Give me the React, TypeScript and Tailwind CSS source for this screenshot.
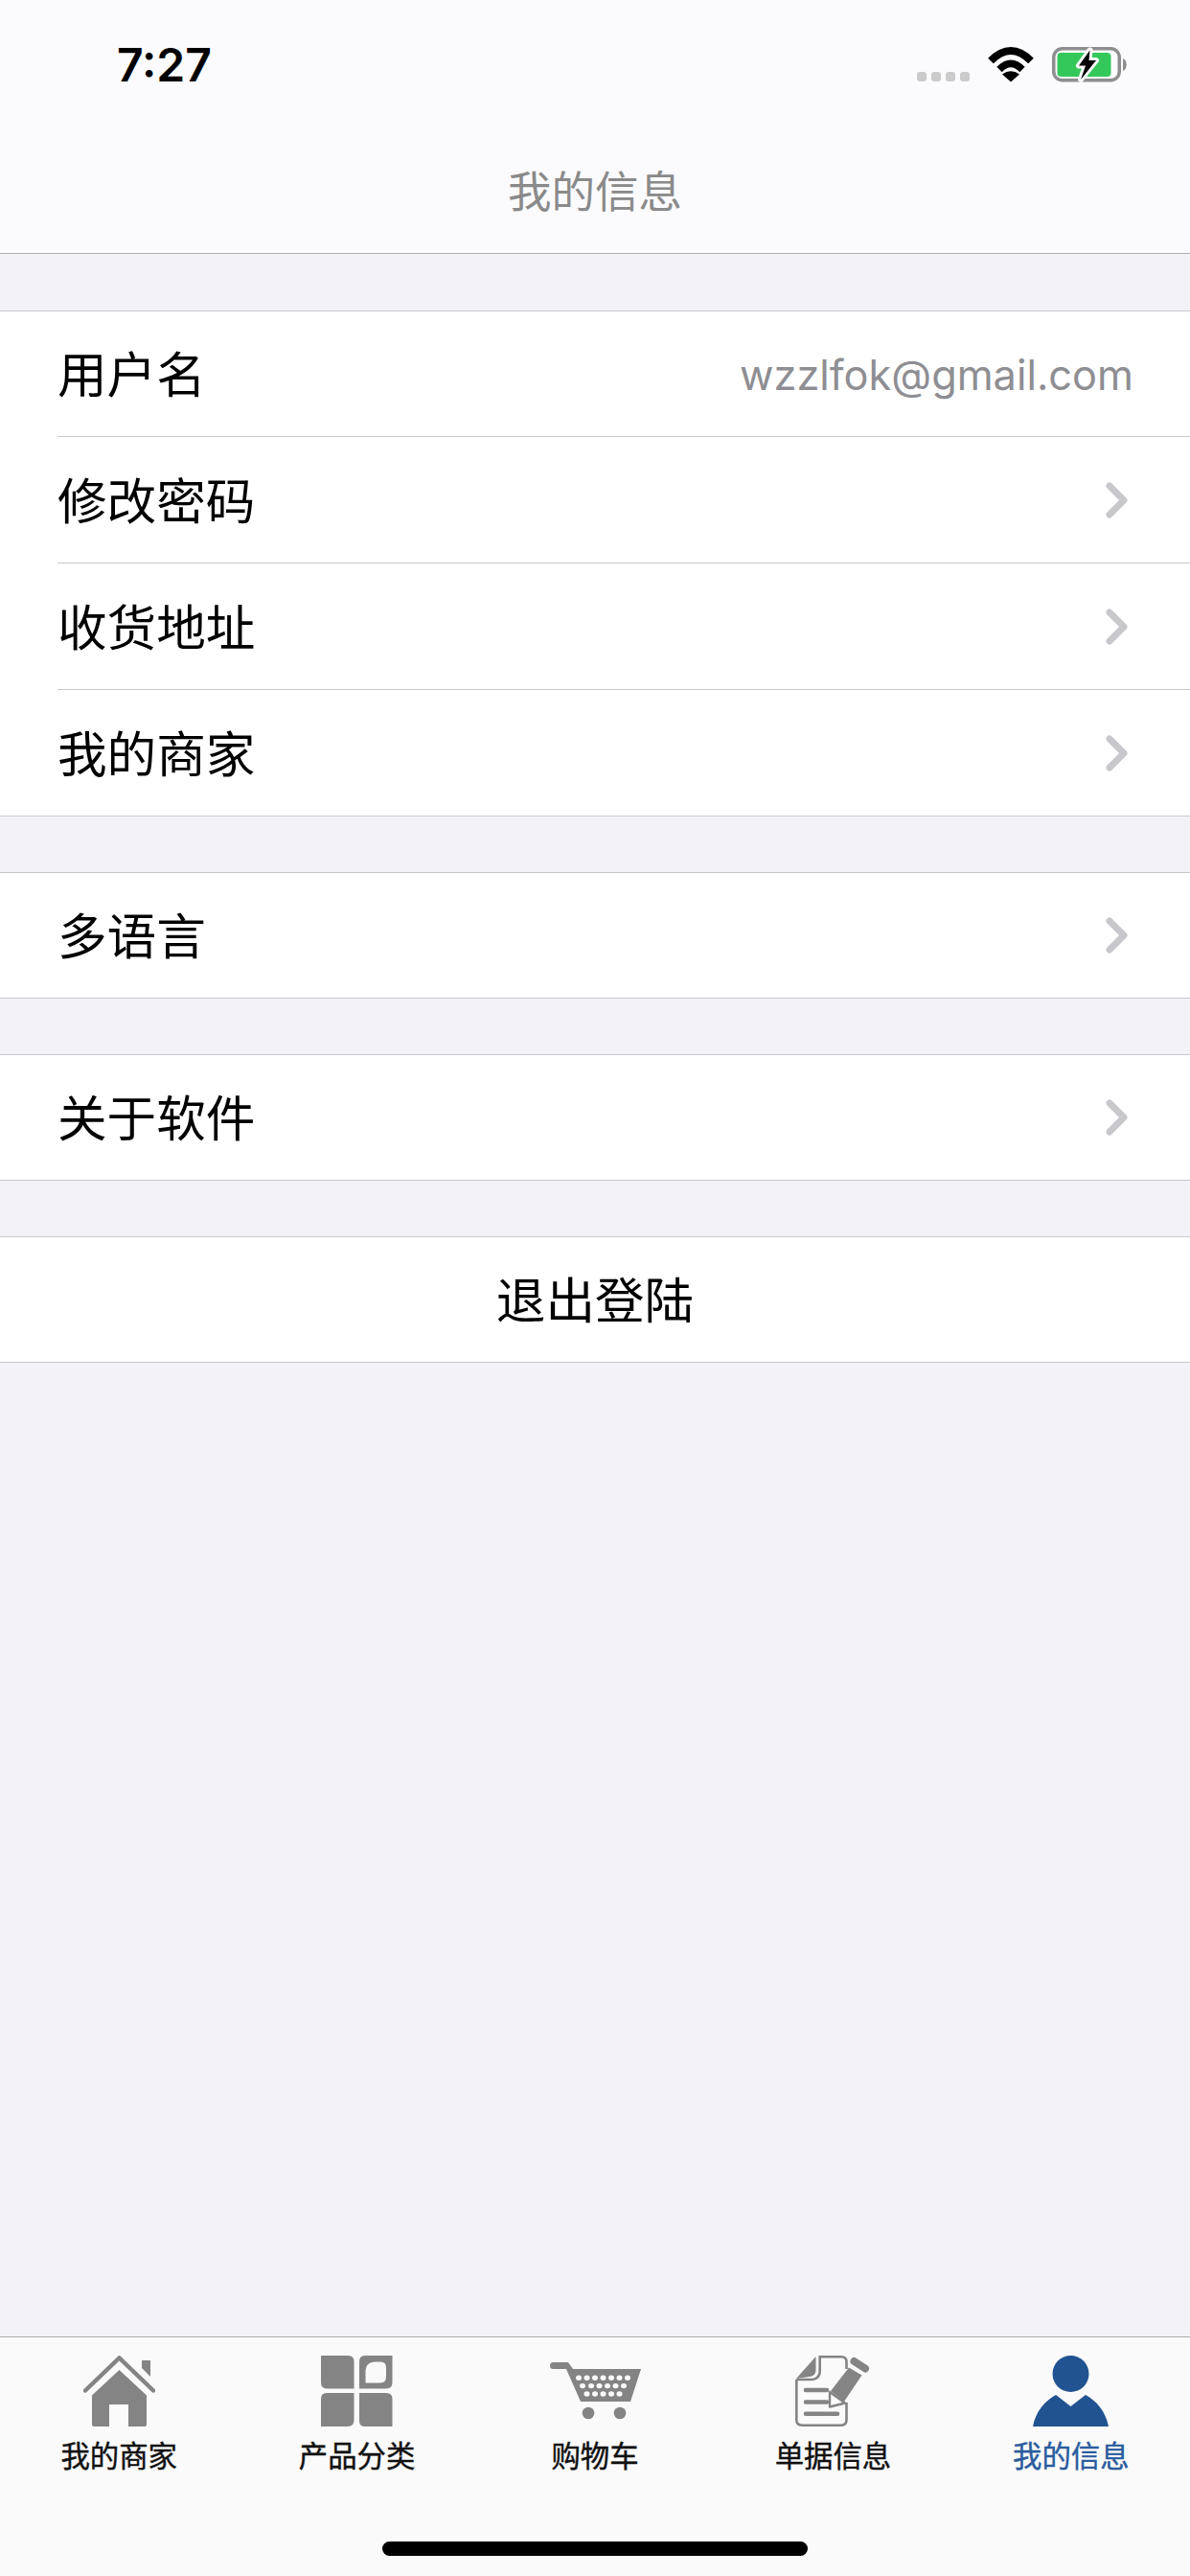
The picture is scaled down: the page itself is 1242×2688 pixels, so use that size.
import React from "react";

const GRAY = "#848484";

function Chevron() {
  return (
    <svg width="24" height="38" viewBox="0 0 24 38" className="block">
      <path d="M4 4 L19 19 L4 34" fill="none" stroke="#c7c7cc" strokeWidth="7" strokeLinecap="round" strokeLinejoin="round" />
    </svg>
  );
}

function Row({ label, heightClass, last, value }: { label: string; heightClass: string; last?: boolean; value?: string }) {
  return (
    <div className={`ml-[60px] pr-[64px] flex items-center justify-between ${heightClass} ${last ? "" : "border-b border-[#c8c7cc]"}`}>
      <span className="mb-[4px] text-[51.6px] leading-none text-black">{label}</span>
      {value ? (
        <span className="mt-[4px] mr-[-5px] font-['Inter',sans-serif] text-[43.3px] leading-none text-[#8e8e93]">{value}</span>
      ) : (
        <Chevron />
      )}
    </div>
  );
}

function Section({ className, children }: { className: string; children: React.ReactNode }) {
  return <section className={`bg-white border-y border-[#c8c7cc] ${className}`}>{children}</section>;
}

function Wifi() {
  return (
    <svg width="48" height="37" viewBox="0 0 48 37" className="block">
      <path d="M3 14.5 Q24 -6.5 45 14.5" fill="none" stroke="#000" strokeWidth="8" />
      <path d="M12 23.5 Q24 11.5 36 23.5" fill="none" stroke="#000" strokeWidth="7.5" />
      <path d="M24 36.5 L15 28.5 Q24 22 33 28.5 Z" fill="#000" />
    </svg>
  );
}

function Battery() {
  return (
    <svg width="79" height="37" viewBox="0 0 79 37" className="block">
      <rect x="1.75" y="1.75" width="68.5" height="33" rx="9" fill="none" stroke="#8e8e8e" strokeWidth="3.5" />
      <rect x="5.5" y="6" width="56" height="25" rx="4" fill="#34c85a" />
      <path d="M74 12 C79 14 79 23 74 25 Z" fill="#8e8e8e" />
      <path d="M39.5 3.5 L28 19.5 L35 19.5 L30 34 L46 14 L38.5 14 Z" fill="#000" stroke="#fbfbfd" strokeWidth="6" paintOrder="stroke" strokeLinejoin="round" />
    </svg>
  );
}

function HomeIcon() {
  return (
    <svg width="75" height="74" viewBox="0 0 75 74" className="block">
      <path d="M2 36.5 L37.5 2.5 L73 36.5" fill="none" stroke={GRAY} strokeWidth="4.5" strokeLinecap="round" strokeLinejoin="miter" />
      <path d="M61 5 H70 V22 L61 13 Z" fill={GRAY} />
      <path fillRule="evenodd" d="M37.5 15 L66 41.5 V72 Q66 74 64 74 H47 V51 H27 V74 H11 Q9 74 9 72 V41.5 Z" fill={GRAY} />
    </svg>
  );
}

function GridIcon() {
  return (
    <svg width="75" height="74" viewBox="0 0 75 74" className="block">
      <path d="M0 0 H28 Q34.5 0 34.5 6 V34.5 H6 Q0 34.5 0 28 Z" fill={GRAY} />
      <path fillRule="evenodd" d="M46 0 H74.5 V28 Q74.5 34.5 68 34.5 H40 V6 Q40 0 46 0 Z M46.5 28.5 V17 Q46.5 6.5 57 6.5 H62 Q68 6.5 68 12.5 V22 Q68 28.5 62 28.5 Z" fill={GRAY} />
      <path d="M6 39 H34.5 V67 Q34.5 74 28 74 H0 V45 Q0 39 6 39 Z" fill={GRAY} />
      <path d="M40 39 H68 Q74.5 39 74.5 45 V74 H46 Q40 74 40 68 Z" fill={GRAY} />
    </svg>
  );
}

function CartIcon() {
  const r1 = [30, 38.5, 47, 55.5, 64, 72.5, 81];
  const r2 = [34, 43, 51.5, 60, 68.5, 77];
  const r3 = [38.5, 47, 55.5, 64, 72.5];
  return (
    <svg width="95" height="60" viewBox="0 0 95 60" className="block">
      <path d="M3.5 0 H19 L24 7 H95 L84 41 H32 L17 7 H3.5 A3.5 3.5 0 0 1 3.5 0 Z" fill={GRAY} />
      {r1.map((x) => <ellipse key={`a${x}`} cx={x} cy="16.3" rx="3" ry="2.7" fill="#fafafa" />)}
      {r2.map((x) => <ellipse key={`b${x}`} cx={x} cy="24.6" rx="3" ry="2.7" fill="#fafafa" />)}
      {r3.map((x) => <ellipse key={`c${x}`} cx={x} cy="33" rx="3" ry="2.7" fill="#fafafa" />)}
      <circle cx="40" cy="53" r="6.3" fill={GRAY} />
      <circle cx="73" cy="53" r="6.3" fill={GRAY} />
    </svg>
  );
}

function DocIcon() {
  return (
    <svg width="78" height="74" viewBox="0 0 78 74" className="block">
      <path d="M1 24 L21.5 1 V15 Q21.5 21 15 22 Z" fill={GRAY} />
      <path d="M1.3 25 H18 Q25.7 24 25.7 16 V1.3 H48 Q53.5 1.3 53.5 6.5 V14 M53.5 49 V67 Q53.5 72.7 48 72.7 H7 Q1.3 72.7 1.3 67 V25" fill="none" stroke={GRAY} strokeWidth="2.6" />
      <path d="M11 36 H33 M11 48.5 H33 M11 60.7 H44" fill="none" stroke={GRAY} strokeWidth="4.6" strokeLinecap="round" />
      <path d="M37 37 L56 12.5 L69.5 20.5 L51 48 Z" fill={GRAY} />
      <path d="M61.5 6 L73 13.5" fill="none" stroke={GRAY} strokeWidth="8" strokeLinecap="round" />
      <path d="M36 38 L36 53.5 L52 49.5 Z" fill="#fafafa" stroke={GRAY} strokeWidth="2.4" strokeLinejoin="round" />
    </svg>
  );
}

function PersonIcon() {
  return (
    <svg width="79" height="74" viewBox="0 0 79 74" className="block">
      <ellipse cx="39.5" cy="19" rx="19" ry="19" fill="#215391" />
      <path d="M0 74 C3 58 13 47 24 41 L39.5 53 L55 41 C66 47 76 58 79 74 Z" fill="#215391" />
    </svg>
  );
}

function Tab({ icon, label, active }: { icon: React.ReactNode; label: string; active?: boolean }) {
  return (
    <div className="flex-1 flex flex-col items-center">
      <div className="h-[74px] flex items-center justify-center">{icon}</div>
      <span className={`mt-[12px] text-[30.4px] leading-[34px] [-webkit-text-stroke:0.4px_currentColor] ${active ? "text-[#2a5c9e]" : "text-[#111]"}`}>{label}</span>
    </div>
  );
}

export default function App() {
  return (
    <div className="w-[1242px] h-[2688px] flex flex-col bg-[#f2f2f7] font-['Noto_Sans_CJK_SC',sans-serif]">
      <header className="h-[265px] shrink-0 bg-[#fbfbfd] border-b border-[#adadb2] flex flex-col">
        <div className="h-[133px] flex justify-between pl-[122px] pr-[65px] pt-[49px]">
          <span className="font-['Inter',sans-serif] font-semibold text-[48px] leading-[37px] text-black">7:27</span>
          <div className="flex items-start gap-[19px]">
            <div className="flex gap-[5px] mt-[26px]">
              <div className="size-[10px] rounded-[3px] bg-[#cbcbcb]" />
              <div className="size-[10px] rounded-[3px] bg-[#cbcbcb]" />
              <div className="size-[10px] rounded-[3px] bg-[#cbcbcb]" />
              <div className="size-[10px] rounded-[3px] bg-[#cbcbcb]" />
            </div>
            <Wifi />
            <Battery />
          </div>
        </div>
        <h1 className="mt-[34px] text-center font-normal text-[45.5px] leading-[60px] text-[#8a8a8a]">我的信息</h1>
      </header>

      <Section className="mt-[59px]">
        <Row label="用户名" value="wzzlfok@gmail.com" heightClass="h-[131px]" />
        <Row label="修改密码" heightClass="h-[132px]" />
        <Row label="收货地址" heightClass="h-[132px]" />
        <Row label="我的商家" heightClass="h-[131px]" last />
      </Section>
      <Section className="mt-[58px]">
        <Row label="多语言" heightClass="h-[130px]" last />
      </Section>
      <Section className="mt-[58px]">
        <Row label="关于软件" heightClass="h-[130px]" last />
      </Section>
      <Section className="mt-[58px]">
        <div className="h-[130px] flex items-center justify-center pb-[4px] text-[51.6px] leading-none text-black">退出登陆</div>
      </Section>

      <footer className="mt-auto h-[250px] bg-[#fafafa] border-t border-[#adadb2] flex flex-col items-center">
        <div className="w-full flex pt-[19px]">
          <Tab icon={<HomeIcon />} label="我的商家" />
          <Tab icon={<GridIcon />} label="产品分类" />
          <Tab icon={<CartIcon />} label="购物车" />
          <Tab icon={<DocIcon />} label="单据信息" />
          <Tab icon={<PersonIcon />} label="我的信息" active />
        </div>
        <div className="mt-[74px] w-[444px] h-[15px] rounded-full bg-black" />
      </footer>
    </div>
  );
}
